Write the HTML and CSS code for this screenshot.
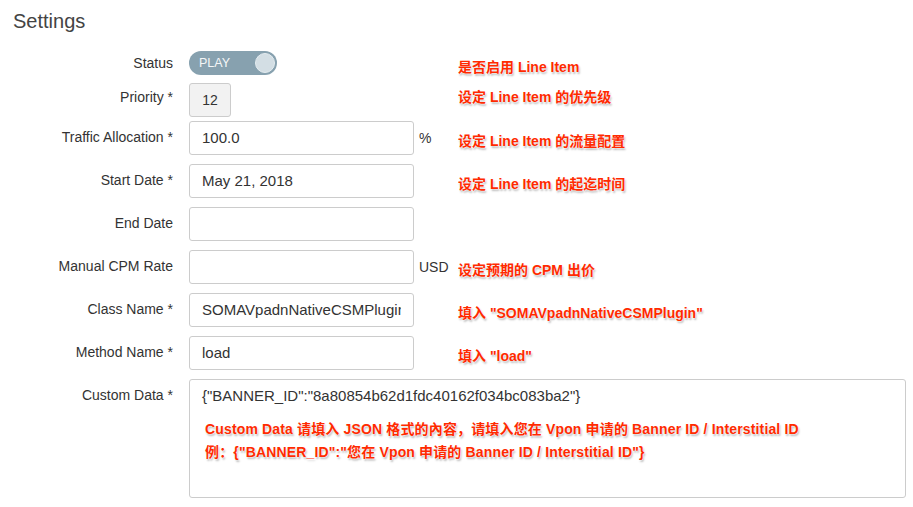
FILE: index.html
```html
<!DOCTYPE html>
<html lang="zh-CN">
<head>
<meta charset="utf-8">
<title>Settings</title>
<link rel="stylesheet" href="styles.css">
</head>
<body>
<div class="page">
  <h1 class="title">Settings</h1>
  <div class="form">
    <div class="row row-status">
      <div class="label label-center">Status</div>
      <div class="field"><div class="toggle"><span class="toggle-text">PLAY</span><span class="knob"></span></div></div>
      <div class="unit"></div>
      <div class="note note-status">是否启用 Line Item</div>
    </div>
    <div class="row row-priority">
      <div class="label label-priority">Priority *</div>
      <div class="field"><div class="priority">12</div></div>
      <div class="unit"></div>
      <div class="note note-priority">设定 Line Item 的优先级</div>
    </div>
    <div class="row">
      <div class="label">Traffic Allocation *</div>
      <div class="field"><div class="input"><span class="value">100.0</span></div></div>
      <div class="unit">%</div>
      <div class="note">设定 Line Item 的流量配置</div>
    </div>
    <div class="row">
      <div class="label">Start Date *</div>
      <div class="field"><div class="input"><span class="value">May 21, 2018</span></div></div>
      <div class="unit"></div>
      <div class="note">设定 Line Item 的起迄时间</div>
    </div>
    <div class="row">
      <div class="label">End Date</div>
      <div class="field"><div class="input"><span class="value"></span></div></div>
      <div class="unit"></div>
      <div class="note"></div>
    </div>
    <div class="row">
      <div class="label">Manual CPM Rate</div>
      <div class="field"><div class="input"><span class="value"></span></div></div>
      <div class="unit">USD</div>
      <div class="note">设定预期的 CPM 出价</div>
    </div>
    <div class="row">
      <div class="label">Class Name *</div>
      <div class="field"><div class="input"><span class="value">SOMAVpadnNativeCSMPlugin</span></div></div>
      <div class="unit"></div>
      <div class="note">填入 "SOMAVpadnNativeCSMPlugin"</div>
    </div>
    <div class="row">
      <div class="label">Method Name *</div>
      <div class="field"><div class="input"><span class="value">load</span></div></div>
      <div class="unit"></div>
      <div class="note">填入 "load"</div>
    </div>
    <div class="row row-custom">
      <div class="label">Custom Data *</div>
      <div class="textarea">
        <div class="json">{"BANNER_ID":"8a80854b62d1fdc40162f034bc083ba2"}</div>
        <div class="note-block">
          <div>Custom Data 请填入 JSON 格式的內容，请填入您在 Vpon 申请的 Banner ID / Interstitial ID</div>
          <div>例：{"BANNER_ID":"您在 Vpon 申请的 Banner ID / Interstitial ID"}</div>
        </div>
      </div>
    </div>
  </div>
</div>
</body>
</html>
```

FILE: styles.css
```css
* { box-sizing: border-box; }
html, body {
  margin: 0;
  padding: 0;
  background: #ffffff;
}
body {
  font-family: "Liberation Sans", Arial, "Noto Sans CJK SC", sans-serif;
  color: #333333;
  width: 913px;
  height: 507px;
  overflow: hidden;
}
.page {
  padding: 10px 7px 0 13px;
}
.title {
  margin: 0 0 19px 0;
  font-size: 20px;
  line-height: 22px;
  font-weight: normal;
  color: #444444;
}
.form {
  display: flex;
  flex-direction: column;
}
.row {
  display: grid;
  grid-template-columns: 176px 225px 44px 1fr;
  height: 34px;
  margin-bottom: 9px;
}
.row-status {
  height: 24px;
  margin-bottom: 8px;
}
.row-priority {
  margin-bottom: 4px;
}
.row-custom {
  height: 119px;
  margin-bottom: 0;
}
.label {
  text-align: right;
  padding-right: 16px;
  padding-top: 6px;
  font-size: 14px;
  line-height: 20px;
  color: #333333;
  white-space: nowrap;
}
.label-center {
  padding-top: 2px;
}
.label-priority {
  padding-top: 4px;
}
.field {
  display: flex;
}
.input {
  width: 225px;
  height: 34px;
  border: 1px solid #cccccc;
  border-radius: 3px;
  padding: 0 12px;
  display: flex;
}
.value {
  flex: 1;
  overflow: hidden;
  white-space: nowrap;
  font-size: 15px;
  line-height: 32px;
  color: #333333;
}
.unit {
  padding-left: 5px;
  font-size: 14px;
  line-height: 34px;
  color: #333333;
}
.toggle {
  width: 88px;
  height: 24px;
  border-radius: 12px;
  background: #87a1af;
  display: flex;
  align-items: center;
  justify-content: space-between;
  padding: 0 2px 0 10px;
}
.toggle-text {
  color: #f4f6f7;
  font-size: 12.5px;
  line-height: 24px;
}
.knob {
  width: 20px;
  height: 20px;
  border-radius: 50%;
  background: #d3dee4;
  border: 1px solid #e4ecf0;
}
.priority {
  width: 42px;
  height: 34px;
  border: 1px solid #cccccc;
  border-radius: 3px;
  background: #f2f2f2;
  text-align: center;
  font-size: 14px;
  line-height: 32px;
  color: #333333;
}
.note, .note-block {
  font-family: "Liberation Sans", Arial, "Noto Sans CJK SC", sans-serif;
  font-weight: bold;
  font-size: 14px;
  color: #ff2a00;
  text-shadow: 0 0 1px #ffffff, 0 0 2px #ffffff, 1px 2px 2px rgba(0, 0, 0, 0.28);
  white-space: nowrap;
}
.note {
  padding-top: 12px;
  line-height: 16px;
}
.note-status {
  padding-top: 8px;
}
.note-priority {
  padding-top: 6px;
}
.textarea {
  grid-column: 2 / 5;
  height: 119px;
  border: 1px solid #cccccc;
  border-radius: 3px;
  padding: 6px 12px;
}
.json {
  font-size: 15px;
  line-height: 20px;
  color: #333333;
}
.note-block {
  margin-top: 12px;
  margin-left: 3px;
  line-height: 23px;
  letter-spacing: 0.15px;
}
```
